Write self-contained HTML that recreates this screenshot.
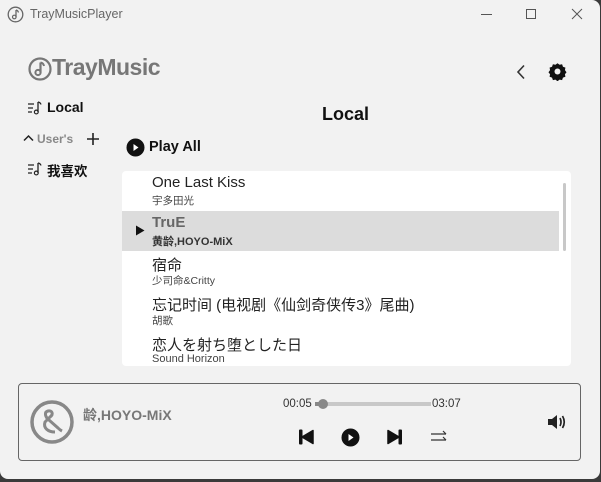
<!DOCTYPE html>
<html><head><meta charset="utf-8"><style>
*{margin:0;padding:0;box-sizing:border-box}
html,body{width:601px;height:482px;overflow:hidden;background:#3a3a3a}
body{font-family:"Liberation Sans","Noto Sans CJK SC",sans-serif;position:relative}
#win{position:absolute;left:0;top:0;width:600px;height:479px;background:#f2f2f2;border-radius:0 8px 8px 8px;overflow:hidden}
.a{position:absolute}
.t{white-space:nowrap}
</style></head><body><div id="win">
<!-- title bar -->
<svg class="a" style="left:7px;top:6px" width="17" height="17" viewBox="0 0 17 17"><circle cx="8.5" cy="8.5" r="7.3" fill="none" stroke="#666" stroke-width="1.3"/><path d="M9 4v7" stroke="#666" stroke-width="1.3"/><circle cx="7.3" cy="11" r="1.8" fill="none" stroke="#666" stroke-width="1.2"/><path d="M9 4q2 .5 2.5 2.5" stroke="#666" fill="none" stroke-width="1.2"/></svg>
<div class="a t" style="left:30px;top:7px;font-size:12.5px;color:#666">TrayMusicPlayer</div>
<div class="a" style="left:481px;top:14px;width:11px;height:1px;background:#555"></div>
<div class="a" style="left:526px;top:9px;width:10px;height:10px;border:1px solid #555"></div>
<svg class="a" style="left:571px;top:8px" width="12" height="12"><path d="M1 1L11 11M11 1L1 11" stroke="#555" stroke-width="1"/></svg>
<!-- logo -->
<svg class="a" style="left:28px;top:57px" width="24" height="24" viewBox="0 0 24 24"><circle cx="12" cy="12" r="10.5" fill="none" stroke="#777" stroke-width="2.2"/><path d="M12.5 5.5v10" stroke="#777" stroke-width="2.2"/><circle cx="10" cy="15.5" r="2.6" fill="none" stroke="#777" stroke-width="2"/><path d="M12.5 5.5q3 .5 3.5 3.5" stroke="#777" fill="none" stroke-width="2"/></svg>
<div class="a t" style="left:52px;top:54px;font-size:23px;font-weight:bold;color:#777;letter-spacing:-0.5px">TrayMusic</div>
<!-- back / gear -->
<svg class="a" style="left:515px;top:64px" width="12" height="16"><path d="M9 1.5L3 8l6 6.5" stroke="#333" stroke-width="1.6" fill="none"/></svg>
<svg class="a" style="left:548px;top:62px" width="19" height="19" viewBox="0 0 24 24"><path fill="#111" d="M12 1.5l2.6 2 3.2-.6 1.1 3.1 3.1 1.1-.6 3.2 2 2.6-2 2.6.6 3.2-3.1 1.1-1.1 3.1-3.2-.6-2.6 2-2.6-2-3.2.6-1.1-3.1-3.1-1.1.6-3.2-2-2.6 2-2.6-.6-3.2 3.1-1.1 1.1-3.1 3.2.6z"/><circle cx="12" cy="12" r="3.8" fill="#f2f2f2"/></svg>
<!-- sidebar -->
<svg class="a" style="left:27px;top:101px" width="15" height="14" viewBox="0 0 15 14"><path d="M1 3h6M1 7h5M1 11h4" stroke="#222" stroke-width="1.3"/><path d="M11 1v10" stroke="#222" stroke-width="1.3"/><circle cx="9.3" cy="11" r="1.9" fill="none" stroke="#222" stroke-width="1.2"/><path d="M11 1q2.5.5 3 2.5" stroke="#222" fill="none" stroke-width="1.2"/></svg>
<div class="a t" style="left:47px;top:99px;font-size:14px;font-weight:bold;color:#111">Local</div>
<svg class="a" style="left:23px;top:134px" width="11" height="8"><path d="M1 6.5L5.5 2 10 6.5" stroke="#222" stroke-width="1.5" fill="none"/></svg>
<div class="a t" style="left:37px;top:132px;font-size:12px;font-weight:bold;color:#888">User's</div>
<svg class="a" style="left:87px;top:133px" width="12" height="12"><path d="M6 0v12M0 6h12" stroke="#222" stroke-width="1.6"/></svg>
<svg class="a" style="left:27px;top:162px" width="15" height="14" viewBox="0 0 15 14"><path d="M1 3h6M1 7h5M1 11h4" stroke="#222" stroke-width="1.3"/><path d="M11 1v10" stroke="#222" stroke-width="1.3"/><circle cx="9.3" cy="11" r="1.9" fill="none" stroke="#222" stroke-width="1.2"/><path d="M11 1q2.5.5 3 2.5" stroke="#222" fill="none" stroke-width="1.2"/></svg>
<div class="a t" style="left:47px;top:160px;font-size:13.5px;font-weight:bold;color:#111">我喜欢</div>
<!-- header -->
<div class="a t" style="left:322px;top:104px;font-size:18px;font-weight:bold;color:#111">Local</div>
<svg class="a" style="left:126px;top:138px" width="19" height="19"><circle cx="9.5" cy="9.5" r="9" fill="#111"/><path d="M7.5 6v7l5-3.5z" fill="#fff"/></svg>
<div class="a t" style="left:149px;top:139px;font-size:14.5px;font-weight:bold;color:#111">Play All</div>
<!-- list -->
<div class="a" style="left:122px;top:171px;width:449px;height:195px;background:#fff;border-radius:4px;overflow:hidden">
  <div class="a" style="left:0;top:40px;width:437px;height:40px;background:#dcdcdc"></div>
  <div class="a" style="left:441px;top:12px;width:3px;height:68px;background:#c8c8c8;border-radius:2px"></div>
  <svg class="a" style="left:13px;top:54px" width="10" height="11"><path d="M1 0.5v10l8.5-5z" fill="#111"/></svg>
  <div class="a t" style="left:30px;top:3px;font-size:15px;color:#222">One Last Kiss</div>
  <div class="a t" style="left:30px;top:22px;font-size:10.5px;color:#444">宇多田光</div>
  <div class="a t" style="left:30px;top:43px;font-size:15px;font-weight:bold;color:#666">TruE</div>
  <div class="a t" style="left:30px;top:62px;font-size:11px;font-weight:bold;color:#333">黄龄,HOYO-MiX</div>
  <div class="a t" style="left:30px;top:83px;font-size:15px;color:#222">宿命</div>
  <div class="a t" style="left:30px;top:102px;font-size:10.5px;color:#444">少司命&amp;Critty</div>
  <div class="a t" style="left:30px;top:123px;font-size:15px;color:#222">忘记时间 (电视剧《仙剑奇侠传3》尾曲)</div>
  <div class="a t" style="left:30px;top:142px;font-size:10.5px;color:#444">胡歌</div>
  <div class="a t" style="left:30px;top:163px;font-size:15px;color:#222">恋人を射ち堕とした日</div>
  <div class="a t" style="left:30px;top:182px;font-size:11px;color:#444">Sound Horizon</div>
</div>
<!-- player -->
<div class="a" style="left:18px;top:383px;width:563px;height:78px;border:1px solid #666;border-radius:4px"></div>
<svg class="a" style="left:28px;top:398px" width="48" height="48" viewBox="0 0 48 48"><circle cx="24" cy="24" r="20" fill="none" stroke="#888" stroke-width="3.5"/><path d="M27 34C20 34 15 30 17 24L22 19C26 16 24 12 20 13C16 14 17 19 21 22L30 30C32 32 34 33 34 33" stroke="#888" stroke-width="3" fill="none"/></svg>
<div class="a t" style="left:83px;top:405px;font-size:14px;font-weight:bold;color:#777">龄,HOYO-MiX</div>
<div class="a t" style="left:283px;top:398px;font-size:11.5px;color:#333">00:05</div>
<div class="a" style="left:315px;top:402px;width:116px;height:4px;background:#c8c8c8"></div>
<div class="a" style="left:315px;top:402px;width:8px;height:4px;background:#888"></div>
<div class="a" style="left:318px;top:399px;width:10px;height:10px;border-radius:50%;background:#888"></div>
<div class="a t" style="left:432px;top:398px;font-size:11.5px;color:#333">03:07</div>
<svg class="a" style="left:299px;top:429px" width="15" height="16"><rect x="0" y="0.5" width="3.5" height="15" rx="1" fill="#111"/><path d="M3 8L14 1.5v13z" fill="#111" stroke="#111" stroke-width="1.5" stroke-linejoin="round"/></svg>
<svg class="a" style="left:341px;top:428px" width="19" height="19"><circle cx="9.5" cy="9.5" r="9" fill="#111"/><path d="M7.5 6v7l5-3.5z" fill="#fff"/></svg>
<svg class="a" style="left:387px;top:429px" width="15" height="16"><path d="M1 1.5L12 8 1 14.5z" fill="#111" stroke="#111" stroke-width="1.5" stroke-linejoin="round"/><rect x="11.5" y="0.5" width="3.5" height="15" rx="1" fill="#111"/></svg>
<svg class="a" style="left:430px;top:429px" width="18" height="16"><path d="M1 5h15M13 2l3 3M1 11h15M13 8l3 3" stroke="#333" stroke-width="1.2" fill="none"/></svg>
<svg class="a" style="left:547px;top:412px" width="20" height="20"><path d="M1 7h4l5-4v14l-5-4H1z" fill="#222"/><path d="M13 6q2 4 0 8M15.5 4q3.5 6 0 12" stroke="#222" stroke-width="1.7" fill="none"/></svg>
</div></body></html>
